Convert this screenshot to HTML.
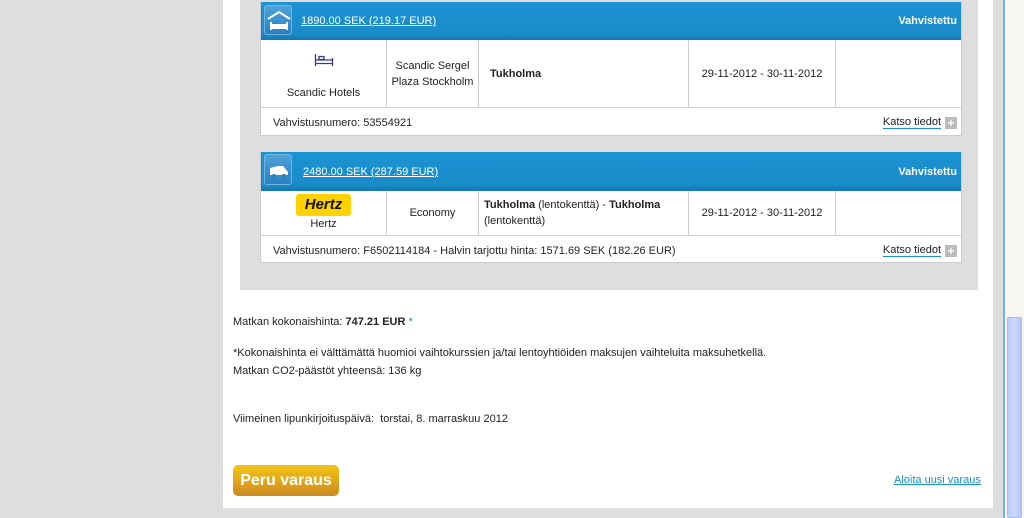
<!DOCTYPE html>
<html><head><meta charset="utf-8"><style>
*{box-sizing:border-box;margin:0;padding:0}
body{width:1024px;height:518px;background:#dedede;font-family:"Liberation Sans",sans-serif;font-size:11px;color:#222;position:relative;overflow:hidden}
.abs{position:absolute}
.panel{left:223px;top:0;width:770px;height:508px;background:#fff}
.inner{left:240px;top:0;width:738px;height:290px;background:#dedede}
.card{position:absolute;left:260px;width:702px;background:#fff;border:1px solid #ccc;border-top:none}
.hd{height:38px;background:linear-gradient(#1c93d3,#1a8bc9 85%,#1676ab);color:#fff;position:relative}
.hd .ic{position:absolute;left:3px;top:3px;width:28px;height:30px;border-radius:3px;background:linear-gradient(#4fa3d8,#2a7fbf);border:1px solid #6db5e3}
.hd .pr{position:absolute;left:40px;top:13px;text-decoration:underline;font-size:11px}
.hd .st{position:absolute;right:4px;top:13px;font-weight:bold;font-size:11px}
.row{display:flex;border-bottom:1px solid #ccc}
.row>div{border-right:1px solid #ccc;display:flex;align-items:center;justify-content:center;text-align:center;line-height:16px}
.row>div:last-child{border-right:none}
.ft{position:relative;height:27px}
.ft .l{position:absolute;left:12px;top:9px}
.ft .r{position:absolute;right:4px;top:8px;display:flex;align-items:center}
.ft .r a{color:#222;text-decoration:none;border-bottom:1px solid #1a8fcf;margin-right:4px}
.plus{width:12px;height:12px;background:#bbb;color:#fff;font-weight:bold;font-size:12px;line-height:12px;text-align:center}
.txt{left:233px;font-size:11px}
</style></head><body>
<div class="abs panel"></div>
<div class="abs inner"></div>

<div class="card" style="top:2px">
 <div class="hd"><div class="ic"><svg width="28" height="30"><path d="M3 13 L14 6 L25 13" stroke="#fff" stroke-width="2" fill="none"/><rect x="6" y="18" width="16" height="5" fill="#fff"/><rect x="5" y="16" width="2" height="8" fill="#fff"/><rect x="21" y="16" width="2" height="8" fill="#fff"/></svg></div><span class="pr">1890.00 SEK (219.17 EUR)</span><span class="st">Vahvistettu</span></div>
 <div class="row" style="height:68px">
  <div style="width:126px;flex-direction:column"><svg width="20" height="14" style="margin-top:6px"><path d="M1.5 1v12M18.5 5v8M1.5 10.5h17M1.5 7h17M5 3.5h5v3H5z" stroke="#3a3a8a" stroke-width="1.3" fill="none"/></svg><div style="margin-top:18px">Scandic Hotels</div></div>
  <div style="width:92px">Scandic Sergel<br>Plaza Stockholm</div>
  <div style="width:210px;justify-content:flex-start;padding-left:11px;font-weight:bold">Tukholma</div>
  <div style="width:147px">29-11-2012 - 30-11-2012</div>
  <div style="flex:1"></div>
 </div>
 <div class="ft"><span class="l">Vahvistusnumero: 53554921</span><span class="r"><a>Katso tiedot</a><span class="plus">+</span></span></div>
</div>

<div class="card" style="top:152px">
 <div class="hd" style="height:39px"><div class="ic" style="top:2px;height:31px"><svg width="28" height="30"><path d="M5 20 L5 13 L13 11 L18 11 L23 17 L23 20 Z" fill="#fff"/><circle cx="9" cy="21" r="2" fill="#2a7fbf"/><circle cx="19" cy="21" r="2" fill="#2a7fbf"/></svg></div><span class="pr" style="left:42px;top:14px">2480.00 SEK (287.59 EUR)</span><span class="st" style="top:14px">Vahvistettu</span></div>
 <div class="row" style="height:45px">
  <div style="width:126px;flex-direction:column"><div style="width:55px;height:22px;background:#ffd200;border-radius:3px;font-weight:bold;font-style:italic;font-size:15px;line-height:22px;color:#111">Hertz</div><div>Hertz</div></div>
  <div style="width:92px">Economy</div>
  <div style="width:210px;justify-content:flex-start;text-align:left;padding-left:5px"><span><b>Tukholma</b> (lentokenttä) - <b>Tukholma</b><br>(lentokenttä)</span></div>
  <div style="width:147px">29-11-2012 - 30-11-2012</div>
  <div style="flex:1"></div>
 </div>
 <div class="ft" style="height:26px"><span class="l">Vahvistusnumero: F6502114184 - Halvin tarjottu hinta: 1571.69 SEK (182.26 EUR)</span><span class="r"><a>Katso tiedot</a><span class="plus">+</span></span></div>
</div>

<div class="abs txt" style="top:316px">Matkan kokonaishinta: <b>747.21 EUR</b> <span style="color:#1a8fcf">*</span></div>
<div class="abs txt" style="top:347px">*Kokonaishinta ei välttämättä huomioi vaihtokurssien ja/tai lentoyhtiöiden maksujen vaihteluita maksuhetkellä.</div>
<div class="abs txt" style="top:365px">Matkan CO2-päästöt yhteensä: 136 kg</div>
<div class="abs txt" style="top:413px">Viimeinen lipunkirjoituspäivä:&nbsp; torstai, 8. marraskuu 2012</div>
<div class="abs" style="left:233px;top:465px;width:106px;height:31px;border-radius:5px;background:linear-gradient(#f3c416,#dea21a 60%,#c98a20);color:#fff;font-weight:bold;font-size:16px;line-height:31px;text-align:center">Peru varaus</div>
<div class="abs" style="left:894px;top:474px;color:#1a8fcf;text-decoration:underline">Aloita uusi varaus</div>

<div class="abs" style="left:1003px;top:0;width:2px;height:518px;background:#7ab0e0"></div>
<div class="abs" style="left:1005px;top:0;width:19px;height:518px;background:#f8f6f2"></div>
<div class="abs" style="left:1007px;top:317px;width:15px;height:201px;background:linear-gradient(90deg,#b9ccf8,#c9d8fb,#b5c8f5);border:1px solid #a6bdf0;border-radius:2px"></div>
</body></html>
